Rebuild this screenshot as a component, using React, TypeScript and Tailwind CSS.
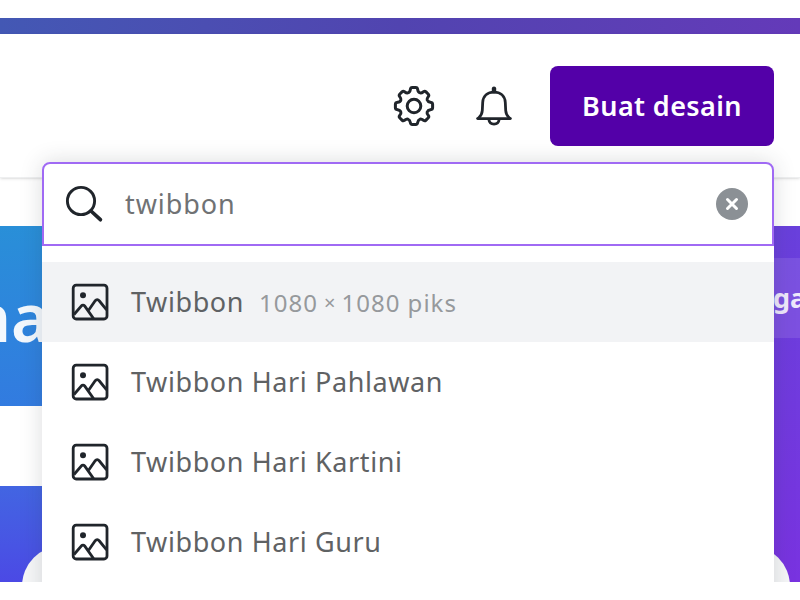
import React from "react";

const suggestions = [
  { label: "Twibbon", size: ["1080", "1080 piks"], active: true },
  { label: "Twibbon Hari Pahlawan" },
  { label: "Twibbon Hari Kartini" },
  { label: "Twibbon Hari Guru" },
];

function GearIcon() {
  return (
    <svg width="42" height="42" viewBox="0 0 42 42" fill="none" stroke="#20252b" strokeWidth="3" strokeLinejoin="round">
      <path d="M17.3 4.6 Q17.6 2.4 19.3 2.4 H22.7 Q24.4 2.4 24.7 4.6 C25 6.8 26.1 7.6 27.2 7.9 C28.4 8.3 29.4 7.5 30.6 6.6 Q31.8 5.7 33 6.9 L35.1 9 Q36.3 10.2 35.4 11.4 C34.5 12.6 33.7 13.6 34.1 14.8 C34.5 15.9 35.2 17 37.4 17.3 Q39.6 17.6 39.6 19.3 V22.7 Q39.6 24.4 37.4 24.7 C35.2 25 34.5 26.1 34.1 27.2 C33.7 28.4 34.5 29.4 35.4 30.6 Q36.3 31.8 35.1 33 L33 35.1 Q31.8 36.3 30.6 35.4 C29.4 34.5 28.4 33.7 27.2 34.1 C26.1 34.5 25 35.2 24.7 37.4 Q24.4 39.6 22.7 39.6 H19.3 Q17.6 39.6 17.3 37.4 C17 35.2 15.9 34.5 14.8 34.1 C13.6 33.7 12.6 34.5 11.4 35.4 Q10.2 36.3 9 35.1 L6.9 33 Q5.7 31.8 6.6 30.6 C7.5 29.4 8.3 28.4 7.9 27.2 C7.6 26.1 6.8 25 4.6 24.7 Q2.4 24.4 2.4 22.7 V19.3 Q2.4 17.6 4.6 17.3 C6.8 17 7.6 15.9 7.9 14.8 C8.3 13.6 7.5 12.6 6.6 11.4 Q5.7 10.2 6.9 9 L9 6.9 Q10.2 5.7 11.4 6.6 C12.6 7.5 13.6 8.3 14.8 7.9 C15.9 7.6 17 6.8 17.3 4.6 Z" />
      <circle cx="21" cy="21" r="6.8" />
    </svg>
  );
}

function BellIcon() {
  return (
    <svg width="40" height="42" viewBox="0 0 40 42" fill="none" stroke="#20252b" strokeWidth="2.8" strokeLinecap="round" strokeLinejoin="round">
      <path d="M3.6 33.6 H36.4" />
      <path d="M4.5 33 C7 31 8.1 29 8.3 25.5 L8.7 17.5 C9.1 10.8 13.7 7.2 20 7.2 S30.9 10.8 31.3 17.5 L31.7 25.5 C31.9 29 33 31 35.5 33" />
      <path d="M20 6.2 V3.6" strokeWidth="4.4" />
      <path d="M14.9 34.6 C15.3 37.8 17.2 39.1 20 39.1 S24.7 37.8 25.1 34.6" />
    </svg>
  );
}

function SearchIcon() {
  return (
    <svg width="40" height="40" viewBox="0 0 40 40" fill="none" stroke="#20252b" strokeWidth="2.9" strokeLinecap="round">
      <circle cx="17" cy="17" r="13.6" />
      <path d="M27 27 L36.4 35.7" strokeWidth="3.7" />
    </svg>
  );
}

function PictureIcon() {
  return (
    <svg width="38" height="38" viewBox="0 0 38 38" fill="none" stroke="#20252b" strokeWidth="2.8" strokeLinejoin="round" className="shrink-0">
      <rect x="2.2" y="2.2" width="33.8" height="33.8" rx="3" />
      <circle cx="12" cy="12.2" r="3" fill="#20252b" stroke="none" />
      <path d="M3 31.5 L10.2 23.1 Q12 21.3 13.8 23.1 L22.5 35.5" />
      <path d="M17.6 27.3 L24 18 Q26.2 15.4 28.4 18 L35.6 26.8" />
    </svg>
  );
}

export default function App() {
  return (
    <div className="h-[600px] w-[800px] overflow-hidden bg-white py-[18px] font-['Noto_Sans','Open_Sans',sans-serif]">
      <div className="relative flex h-[564px] flex-col overflow-hidden">
        <div className="h-4 shrink-0 bg-linear-to-r from-[#4358b4] via-[#5144b0] to-[#643ab9]" />
        <header className="flex h-36 shrink-0 items-start justify-end border-b border-[#eeeff0] pt-8 pr-[26px] shadow-sm">
          <div className="mt-[19px] mr-[39px]"><GearIcon /></div>
          <div className="mt-[19px] mr-9"><BellIcon /></div>
          <button className="flex h-20 w-56 items-center justify-center rounded-lg bg-[#5300a8] text-[27px] font-semibold text-white">
            <span className="tracking-[0.4px]">Buat desain</span>
          </button>
        </header>
        <main className="mt-12 flex flex-1 overflow-hidden">
          <div className="w-[200px]">
            <div className="flex h-[180px] items-center bg-linear-to-b from-[#298fd8] to-[#327be0]">
              <span className="-ml-[31px] text-[66px] leading-none font-semibold text-[#f3f8fd]">na</span>
            </div>
            <div className="mt-20 h-24 bg-linear-to-b from-[#4265e2] to-[#4b49e5]" />
          </div>
          <div className="flex flex-1 flex-col items-end bg-linear-to-b from-[#6940dc] to-[#7933e0] pt-8">
            <div className="flex h-20 w-[40px] items-center overflow-hidden bg-white/10 pl-[13px] text-[27px] font-bold text-[#eee8fc]">
              ga
            </div>
          </div>
        </main>
        <div className="absolute top-[528px] left-[22px] h-20 w-[768px] rounded-[40px] bg-[#f6f7f8]" />

        <section className="absolute top-[144px] left-[42px] h-[460px] w-[732px] rounded-t-lg bg-white shadow-[0_0_22px_rgba(40,45,55,0.17)]">
          <div className="flex h-[84px] items-center rounded-t-lg border-2 border-[#a06af4] pr-6 pl-5">
            <SearchIcon />
            <span className="ml-[21px] flex-1 text-[27px] tracking-[0.9px] text-[#707274]">twibbon</span>
            <span className="flex size-8 items-center justify-center rounded-full bg-[#8b9095]">
              <svg width="14" height="14" viewBox="0 0 14 14" stroke="white" strokeWidth="3" strokeLinecap="round">
                <path d="M2.5 2.5 L11.5 11.5 M11.5 2.5 L2.5 11.5" />
              </svg>
            </span>
          </div>
          <ul className="pt-4">
            {suggestions.map((item) => (
              <li key={item.label} className={item.active ? "flex h-20 items-center bg-[#f2f3f5] pl-[29px]" : "flex h-20 items-center pl-[29px]"}>
                <PictureIcon />
                <span className="ml-[22px] text-[27px] tracking-[0.6px] text-[#5f6264]">{item.label}</span>
                {item.size && (
                  <span className="mt-0.5 ml-[15px] flex items-center gap-1.5 text-[24px] tracking-[1px] text-[#96999c]">
                    <span>{item.size[0]}</span>
                    <span className="text-[20px] tracking-normal">×</span>
                    <span>{item.size[1]}</span>
                  </span>
                )}
              </li>
            ))}
          </ul>
        </section>
      </div>
    </div>
  );
}
